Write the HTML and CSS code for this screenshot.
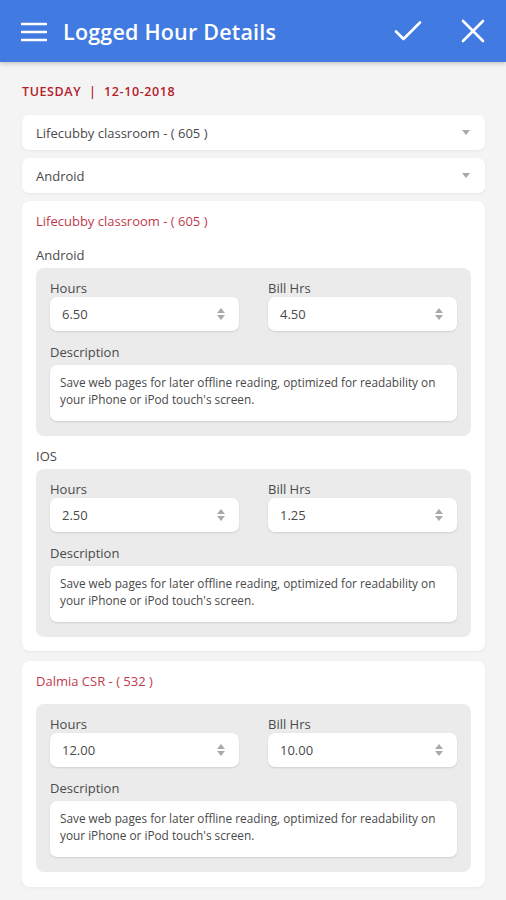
FILE: index.html
```html
<!DOCTYPE html>
<html>
<head>
<meta charset="utf-8">
<link rel="stylesheet" href="styles.css">
</head>
<body>
<header class="appbar">
  <svg class="ic-menu" width="26" height="22" viewBox="0 0 26 22"><path d="M1 3h24M1 11h24M1 19h24" stroke="#fff" stroke-width="2.6" stroke-linecap="round" fill="none"/></svg>
  <h1 class="title">Logged Hour Details</h1>
  <svg class="ic-check" width="28" height="22" viewBox="0 0 28 22"><path d="M2 11.5l7.5 7.5L26 2.5" stroke="#fff" stroke-width="2.6" fill="none" stroke-linecap="round" stroke-linejoin="round"/></svg>
  <svg class="ic-close" width="24" height="24" viewBox="0 0 24 24"><path d="M2 2l20 20M22 2L2 22" stroke="#fff" stroke-width="2.6" fill="none" stroke-linecap="round"/></svg>
</header>
<main class="content">
  <div class="date">TUESDAY &nbsp;|&nbsp; 12-10-2018</div>
  <div class="select"><span>Lifecubby classroom - ( 605 )</span><i class="caret"></i></div>
  <div class="select"><span>Android</span><i class="caret"></i></div>

  <section class="card">
    <div class="card-title">Lifecubby classroom - ( 605 )</div>
    <div class="sub first">Android</div>
    <div class="panel">
      <div class="row">
        <div class="field"><div class="label">Hours</div><div class="input"><span>6.50</span><i class="spin"></i></div></div>
        <div class="field"><div class="label">Bill Hrs</div><div class="input"><span>4.50</span><i class="spin"></i></div></div>
      </div>
      <div class="label desc-label">Description</div>
      <div class="textarea">Save web pages for later offline reading, optimized for readability on your iPhone or iPod touch's screen.</div>
    </div>
    <div class="sub">IOS</div>
    <div class="panel">
      <div class="row">
        <div class="field"><div class="label">Hours</div><div class="input"><span>2.50</span><i class="spin"></i></div></div>
        <div class="field"><div class="label">Bill Hrs</div><div class="input"><span>1.25</span><i class="spin"></i></div></div>
      </div>
      <div class="label desc-label">Description</div>
      <div class="textarea">Save web pages for later offline reading, optimized for readability on your iPhone or iPod touch's screen.</div>
    </div>
  </section>

  <section class="card">
    <div class="card-title">Dalmia CSR - ( 532 )</div>
    <div class="panel gap-top">
      <div class="row">
        <div class="field"><div class="label">Hours</div><div class="input"><span>12.00</span><i class="spin"></i></div></div>
        <div class="field"><div class="label">Bill Hrs</div><div class="input"><span>10.00</span><i class="spin"></i></div></div>
      </div>
      <div class="label desc-label">Description</div>
      <div class="textarea">Save web pages for later offline reading, optimized for readability on your iPhone or iPod touch's screen.</div>
    </div>
  </section>
</main>
</body>
</html>
```
FILE: styles.css
```css
* { box-sizing: border-box; }
html, body { margin: 0; padding: 0; }
body {
  background: #f4f4f4;
  font-family: "Open Sans", "Noto Sans", sans-serif;
  color: #333;
  width: 506px;
  height: 900px;
  overflow: hidden;
}
.appbar {
  height: 62px;
  background: #417ae1;
  display: flex;
  align-items: center;
  padding: 0 21px 0 21px;
  box-shadow: 0 2px 4px rgba(0,0,0,0.18);
  position: relative;
}
.ic-menu { margin-top: 1px; }
.title {
  margin: 0 0 0 16px;
  font-size: 21.5px;
  font-weight: 600;
  color: #fff;
  flex: 1;
  letter-spacing: 0.2px;
}
.ic-check { margin-right: 39px; }
.ic-close { margin-right: 0; }
.content { padding: 0 21px 0 22px; }
.date {
  font-size: 12.5px;
  font-weight: 600;
  color: #b3202b;
  line-height: 20px;
  margin-top: 20px;
  height: 20px;
  letter-spacing: 0.6px;
}
.select {
  margin-top: 13px;
  height: 35px;
  background: #fff;
  border-radius: 7px;
  box-shadow: 0 1px 3px rgba(0,0,0,0.06);
  display: flex;
  align-items: center;
  padding: 0 15px 0 14px;
  font-size: 13px;
  color: #4a4a4a;
}
.select + .select { margin-top: 8px; }
.select span { flex: 1; }
.caret {
  width: 0; height: 0;
  border-left: 4px solid transparent;
  border-right: 4px solid transparent;
  border-top: 5px solid #aaa;
}
.card {
  background: #fff;
  border-radius: 8px;
  margin-top: 8px;
  padding: 10px 14px 14px;
  box-shadow: 0 1px 3px rgba(0,0,0,0.05);
}
.card + .card { margin-top: 10px; padding-bottom: 15px; }
.card-title {
  font-size: 13px;
  color: #c23b4c;
  line-height: 20px;
}
.sub {
  font-size: 13px;
  color: #4a4a4a;
  line-height: 20px;
  margin-top: 10px;
  margin-bottom: 3px;
}
.sub.first { margin-top: 14px; }
.panel {
  background: #ebebeb;
  border-radius: 8px;
  padding: 11px 14px 15px;
}
.panel.gap-top { margin-top: 13px; }
.row { display: flex; gap: 29px; }
.field { flex: 1; }
.label {
  font-size: 13px;
  line-height: 18px;
  color: #4a4a4a;
}
.input {
  height: 34px;
  background: #fff;
  border-radius: 7px;
  box-shadow: 0 1px 2px rgba(0,0,0,0.12);
  display: flex;
  align-items: center;
  padding: 0 14px 0 12px;
  font-size: 13px;
  color: #4a4a4a;
}
.input span { flex: 1; }
.spin {
  width: 8px; height: 12px;
  position: relative;
}
.spin::before, .spin::after {
  content: "";
  position: absolute;
  left: 0;
  border-left: 4px solid transparent;
  border-right: 4px solid transparent;
}
.spin::before { top: 0; border-bottom: 5px solid #aaa; }
.spin::after { bottom: 0; border-top: 5px solid #aaa; }
.desc-label { margin-top: 12px; }
.textarea {
  margin-top: 4px;
  height: 56px;
  background: #fff;
  border-radius: 7px;
  box-shadow: 0 1px 2px rgba(0,0,0,0.12);
  padding: 9px 8px 0 10px;
  font-size: 11.8px;
  line-height: 17px;
  color: #4a4a4a;
}
```
